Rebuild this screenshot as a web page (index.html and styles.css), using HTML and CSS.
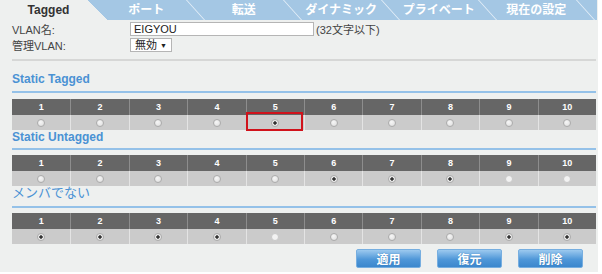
FILE: index.html
```html
<!DOCTYPE html>
<html lang="ja">
<head>
    <meta charset="UTF-8">
    <title>VLAN Tagged</title>
    <link rel="stylesheet" href="styles.css">
</head>
<body>
    <div class="page">
        <div class="tabs">
            <div class="tab active">Tagged</div>
            <div class="tab">ポート</div>
            <div class="tab">転送</div>
            <div class="tab">ダイナミック</div>
            <div class="tab">プライベート</div>
            <div class="tab">現在の設定</div>
            <div class="tab tab-end"></div>
        </div>

        <div class="content">
            <div class="form-row">
                <label class="form-label">VLAN名:</label>
                <input class="text-input" type="text" value="EIGYOU">
                <span class="hint">(32文字以下)</span>
            </div>
            <div class="form-row">
                <label class="form-label">管理VLAN:</label>
                <span class="select">無効 <span class="caret">▼</span></span>
            </div>

            <div class="divider"></div>

            <h2 class="section-title first">Static Tagged</h2>
            <div class="port-table">
                <div class="th">1</div><div class="th">2</div><div class="th">3</div><div class="th">4</div><div class="th">5</div>
                <div class="th">6</div><div class="th">7</div><div class="th">8</div><div class="th">9</div><div class="th">10</div>
                <div class="td"><span class="radio"></span></div>
                <div class="td"><span class="radio"></span></div>
                <div class="td"><span class="radio"></span></div>
                <div class="td"><span class="radio"></span></div>
                <div class="td highlight"><span class="radio checked"></span></div>
                <div class="td"><span class="radio"></span></div>
                <div class="td"><span class="radio"></span></div>
                <div class="td"><span class="radio"></span></div>
                <div class="td"><span class="radio"></span></div>
                <div class="td"><span class="radio"></span></div>
            </div>

            <h2 class="section-title">Static Untagged</h2>
            <div class="port-table">
                <div class="th">1</div><div class="th">2</div><div class="th">3</div><div class="th">4</div><div class="th">5</div>
                <div class="th">6</div><div class="th">7</div><div class="th">8</div><div class="th">9</div><div class="th">10</div>
                <div class="td"><span class="radio"></span></div>
                <div class="td"><span class="radio"></span></div>
                <div class="td"><span class="radio"></span></div>
                <div class="td"><span class="radio"></span></div>
                <div class="td"><span class="radio"></span></div>
                <div class="td"><span class="radio checked"></span></div>
                <div class="td"><span class="radio checked"></span></div>
                <div class="td"><span class="radio checked"></span></div>
                <div class="td"><span class="radio light"></span></div>
                <div class="td"><span class="radio light"></span></div>
            </div>

            <h2 class="section-title plain">メンバでない</h2>
            <div class="port-table">
                <div class="th">1</div><div class="th">2</div><div class="th">3</div><div class="th">4</div><div class="th">5</div>
                <div class="th">6</div><div class="th">7</div><div class="th">8</div><div class="th">9</div><div class="th">10</div>
                <div class="td"><span class="radio checked"></span></div>
                <div class="td"><span class="radio checked"></span></div>
                <div class="td"><span class="radio checked"></span></div>
                <div class="td"><span class="radio checked"></span></div>
                <div class="td"><span class="radio light"></span></div>
                <div class="td"><span class="radio"></span></div>
                <div class="td"><span class="radio"></span></div>
                <div class="td"><span class="radio"></span></div>
                <div class="td"><span class="radio checked"></span></div>
                <div class="td"><span class="radio checked"></span></div>
            </div>

            <div class="buttons">
                <button class="btn">適用</button>
                <button class="btn">復元</button>
                <button class="btn">削除</button>
            </div>
        </div>
    </div>
</body>
</html>
```

FILE: styles.css
```css
body {
    margin: 0;
    background: #fff;
    font-family: "Liberation Sans", "Noto Sans CJK JP", sans-serif;
    font-size: 11px;
    color: #333;
}
.page {
    width: 598px;
    height: 272px;
    background: #eef0ef;
}
.tabs {
    display: flex;
    width: 597px;
    height: 20px;
    background: #a4c7e4;
}
.tab {
    position: relative;
    flex: 0 0 97.5px;
    box-sizing: border-box;
    padding-left: 19px;
    text-align: center;
    line-height: 20px;
    font-size: 12px;
    font-weight: bold;
    color: #fff;
}
.tab::before {
    content: "";
    position: absolute;
    left: 0;
    top: 0;
    width: 1px;
    height: 20px;
    background: #e8f1f9;
    transform: skewX(42deg);
    transform-origin: top left;
}
.tab.active {
    flex-basis: 88px;
    padding-left: 9px;
    background: #eef0ef;
    color: #333;
    z-index: 1;
}
.tab.active::before {
    display: none;
}
.tab.active::after {
    content: "";
    position: absolute;
    right: -19px;
    top: 0;
    width: 19px;
    height: 20px;
    background: linear-gradient(to top right, #eef0ef 50%, transparent 50%);
}
.tab:nth-child(2)::before {
    display: none;
}
.tab-end {
    flex: 1;
}
.content {
    padding: 2px 2px 0 12px;
}
.form-row {
    display: flex;
    align-items: center;
    height: 14px;
    margin-bottom: 2px;
}
.form-label {
    width: 118px;
    color: #444;
}
.text-input {
    box-sizing: border-box;
    width: 184px;
    height: 14px;
    margin: 0;
    padding: 0 3px;
    border: 1px solid #b5b5b5;
    background: #fff;
    font-family: inherit;
    font-size: 11px;
    color: #222;
}
.hint {
    margin-left: 2px;
    color: #444;
}
.select {
    box-sizing: border-box;
    height: 14px;
    padding: 0 4px;
    border: 1px solid #b5b5b5;
    background: #fff;
    line-height: 12px;
    color: #222;
}
.caret {
    font-size: 7px;
    vertical-align: 1px;
}
.divider {
    width: 584px;
    margin-top: 7px;
    border-top: 2px solid #d6d7d6;
}
.section-title {
    width: 584px;
    margin: 0;
    padding-bottom: 4px;
    border-bottom: 2px solid #94c1e8;
    font-size: 12px;
    line-height: 14px;
    font-weight: bold;
    color: #4a92d4;
}
.section-title.first {
    margin-top: 11px;
    padding-bottom: 5px;
}
.section-title.plain {
    padding-bottom: 6px;
    font-size: 13px;
    font-weight: normal;
}
.port-table {
    display: grid;
    grid-template-columns: repeat(10, 1fr);
    width: 584px;
    margin-top: 5px;
}
.section-title.first + .port-table {
    margin-top: 6px;
}
.th {
    height: 16px;
    line-height: 16px;
    background: #666;
    border-left: 1px solid #8d8d8d;
    text-align: center;
    font-size: 9px;
    font-weight: bold;
    color: #fff;
}
.td {
    position: relative;
    display: flex;
    align-items: center;
    justify-content: center;
    height: 15px;
    background: #cbcbcb;
    border-left: 1px solid #e4e4e4;
}
.th:first-child,
.td:nth-child(11) {
    border-left: none;
}
.td.highlight::after {
    content: "";
    position: absolute;
    left: -1px;
    right: 1px;
    top: -3px;
    bottom: -1px;
    border: 2px solid #d0121b;
}
.radio {
    box-sizing: border-box;
    width: 8px;
    height: 8px;
    border-radius: 50%;
    border: 1px solid #ababab;
    background: radial-gradient(circle at 40% 35%, #f6f6f6, #dcdcdc);
}
.radio.light {
    border-color: #c8c8c8;
    background: #f2f2f2;
}
.radio.checked {
    background: radial-gradient(circle, #333 0, #333 1.4px, #f0f0f0 2px, #e2e2e2 100%);
}
.buttons {
    display: flex;
    justify-content: flex-end;
    gap: 16px;
    margin-top: 5px;
    padding-right: 13px;
}
.btn {
    width: 65px;
    height: 19px;
    padding: 0;
    border: 1px solid #76aee0;
    border-radius: 2px;
    background: linear-gradient(#9cc9ef, #4f97d8 55%, #3b87cd);
    font-family: inherit;
    font-size: 12px;
    font-weight: bold;
    color: #fff;
    text-shadow: 0 0 1px #2c6fae;
}
```
